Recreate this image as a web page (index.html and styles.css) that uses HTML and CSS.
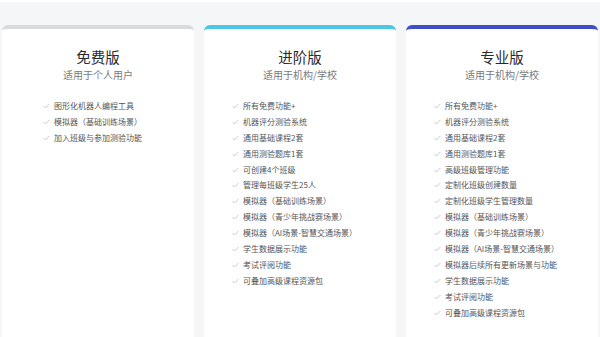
FILE: index.html
```html
<!DOCTYPE html>
<html lang="zh">
<head>
<meta charset="utf-8">
<link rel="stylesheet" href="styles.css">
</head>
<body>
<div class="plans">
  <div class="card card-free">
    <h2 class="title">免费版</h2>
    <p class="sub">适用于个人用户</p>
    <ul class="feats feats-free">
      <li>图形化机器人编程工具</li>
      <li>模拟器（基础训练场景）</li>
      <li>加入班级与参加测验功能</li>
    </ul>
  </div>
  <div class="card card-adv">
    <h2 class="title">进阶版</h2>
    <p class="sub">适用于机构/学校</p>
    <ul class="feats">
      <li>所有免费功能+</li>
      <li>机器评分测验系统</li>
      <li>通用基础课程2套</li>
      <li>通用测验题库1套</li>
      <li>可创建4个班级</li>
      <li>管理每班级学生25人</li>
      <li>模拟器（基础训练场景）</li>
      <li>模拟器（青少年挑战赛场景）</li>
      <li>模拟器（AI场景-智慧交通场景）</li>
      <li>学生数据展示功能</li>
      <li>考试评阅功能</li>
      <li>可叠加高级课程资源包</li>
    </ul>
  </div>
  <div class="card card-pro">
    <h2 class="title">专业版</h2>
    <p class="sub">适用于机构/学校</p>
    <ul class="feats">
      <li>所有免费功能+</li>
      <li>机器评分测验系统</li>
      <li>通用基础课程2套</li>
      <li>通用测验题库1套</li>
      <li>高级班级管理功能</li>
      <li>定制化班级创建数量</li>
      <li>定制化班级学生管理数量</li>
      <li>模拟器（基础训练场景）</li>
      <li>模拟器（青少年挑战赛场景）</li>
      <li>模拟器（AI场景-智慧交通场景）</li>
      <li>模拟器后续所有更新场景与功能</li>
      <li>学生数据展示功能</li>
      <li>考试评阅功能</li>
      <li>可叠加高级课程资源包</li>
    </ul>
  </div>
</div>
</body>
</html>
```
FILE: styles.css
```css
html, body {
  margin: 0;
  padding: 0;
  height: 337px;
  overflow: hidden;
}
body {
  background: #f5f6f8;
  border-top: 2px solid #ffffff;
  box-sizing: border-box;
  font-family: "Noto Sans CJK SC", "Noto Sans", sans-serif;
}
.plans {
  display: flex;
  gap: 10px;
  padding: 23px 2px 0 2px;
}
.card {
  flex: 1;
  height: 330px;
  background: #ffffff;
  border-top: 4px solid #d9dadd;
  border-radius: 6px 6px 0 0;
  box-sizing: border-box;
  padding-top: 18px;
  text-align: center;
}
.card-adv { border-top-color: #4cc6e6; }
.card-pro { border-top-color: #3f50c6; }
.title {
  margin: 0;
  font-size: 14.5px;
  line-height: 20px;
  font-weight: 400;
  color: #2b2b2b;
}
.sub {
  margin: 0;
  font-size: 10px;
  line-height: 16px;
  color: #7a7a7a;
}
.feats {
  list-style: none;
  margin: 15px 0 0 0;
  padding: 0 0 0 28px;
  text-align: left;
}
.feats-free { padding-left: 41px; }
.feats li {
  display: flex;
  align-items: center;
  gap: 4px;
  font-size: 8px;
  line-height: 15.9px;
  height: 15.9px;
  color: #555555;
  white-space: nowrap;
}
.feats li::before {
  content: "";
  width: 7px;
  height: 6px;
  flex: none;
  background: url("data:image/svg+xml;utf8,<svg xmlns='http://www.w3.org/2000/svg' width='7' height='6' viewBox='0 0 7 6'><polyline points='0.5,3 2.5,5 6.5,0.8' fill='none' stroke='%23c4c4c4' stroke-width='0.9'/></svg>") no-repeat center;
}
```
